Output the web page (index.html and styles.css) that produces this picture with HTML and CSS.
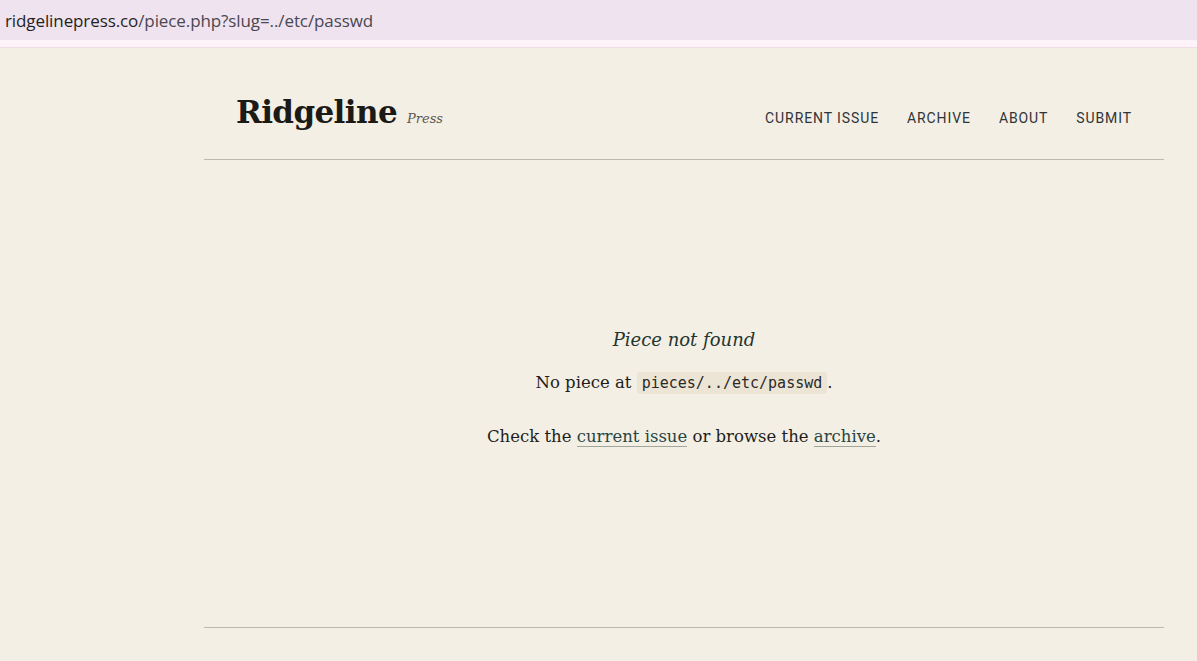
FILE: index.html
```html
<!DOCTYPE html>
<html lang="en">
<head>
    <meta charset="UTF-8">
    <meta name="viewport" content="width=device-width, initial-scale=1.0">
    <title>Piece not found — Ridgeline Press</title>
    <link rel="stylesheet" href="styles.css">
</head>
<body>

    <!-- Address bar -->
    <div class="address-bar">
        <span class="host">ridgelinepress.co</span><span class="path">/piece.php?slug=../etc/passwd</span>
    </div>
    <div class="bar-strip"></div>

    <div class="page">
        <div class="wrap">
            <!-- Masthead -->
            <header class="masthead">
                <a class="brand" href="#">
                    <span class="brand-name">Ridgeline</span>
                    <span class="brand-sub">Press</span>
                </a>
                <nav class="nav">
                    <a href="#">Current Issue</a>
                    <a href="#">Archive</a>
                    <a href="#">About</a>
                    <a href="#">Submit</a>
                </nav>
            </header>

            <!-- Not found message -->
            <main class="notice">
                <h1>Piece not found</h1>
                <p>No piece at <code>pieces/../etc/passwd</code>.</p>
                <p class="hint">Check the <a href="#">current issue</a> or browse the <a href="#">archive</a>.</p>
            </main>

            <footer class="foot"></footer>
        </div>
    </div>

</body>
</html>
```

FILE: styles.css
```css
/* General Reset */
* {
    box-sizing: border-box;
    margin: 0;
    padding: 0;
}

body {
    background: #f3efe5;
    font-family: "DejaVu Serif", Georgia, serif;
    color: #1f1d1a;
    height: 661px;
    overflow: hidden;
}

/* Browser address bar */
.address-bar {
    height: 40px;
    background: #efe3ef;
    padding: 0 5px;
    display: flex;
    align-items: center;
    font-family: "Open Sans", "Noto Sans", sans-serif;
    font-size: 17px;
    letter-spacing: -0.1px;
}

.address-bar .host {
    color: #1f1f24;
}

.address-bar .path {
    color: #4a4752;
}

.bar-strip {
    height: 8px;
    background: #fdf3f8;
    border-bottom: 1px solid #f0dce6;
}

/* Page wrapper */
.page {
    padding-left: 204px;
}

.wrap {
    width: 960px;
}

/* Masthead */
.masthead {
    display: flex;
    align-items: baseline;
    justify-content: space-between;
    padding: 46px 32px 29px 32px;
    border-bottom: 1px solid #bdb8ac;
}

.brand {
    text-decoration: none;
    color: #1c1a17;
    display: flex;
    align-items: baseline;
    gap: 10px;
}

.brand-name {
    font-family: "DejaVu Serif", Georgia, serif;
    font-weight: bold;
    font-size: 31px;
    letter-spacing: -0.6px;
}

.brand-sub {
    font-style: italic;
    font-size: 13px;
    color: #5e5a53;
}

.nav {
    display: flex;
    gap: 28px;
}

.nav a {
    font-family: "Roboto", "Liberation Sans", sans-serif;
    font-size: 14px;
    letter-spacing: 0.9px;
    text-transform: uppercase;
    text-decoration: none;
    color: #2f3438;
}

/* Not found notice */
.notice {
    height: 468px;
    padding-top: 169px;
    text-align: center;
    border-bottom: 1px solid #bdb8ac;
}

.notice h1 {
    font-style: italic;
    font-weight: normal;
    font-size: 18px;
    color: #24352f;
    margin-bottom: 21px;
}

.notice p {
    font-size: 16.5px;
    line-height: 1.4;
}

.notice code {
    font-family: "DejaVu Sans Mono", monospace;
    font-size: 15px;
    background: #ece5d6;
    padding: 2px 5px;
    border-radius: 3px;
    color: #2a2926;
}

.notice .hint {
    margin-top: 31px;
}

.notice a {
    color: #284542;
    text-decoration: none;
    border-bottom: 1px solid #9fa79d;
}

.foot {
    height: 30px;
}
```
